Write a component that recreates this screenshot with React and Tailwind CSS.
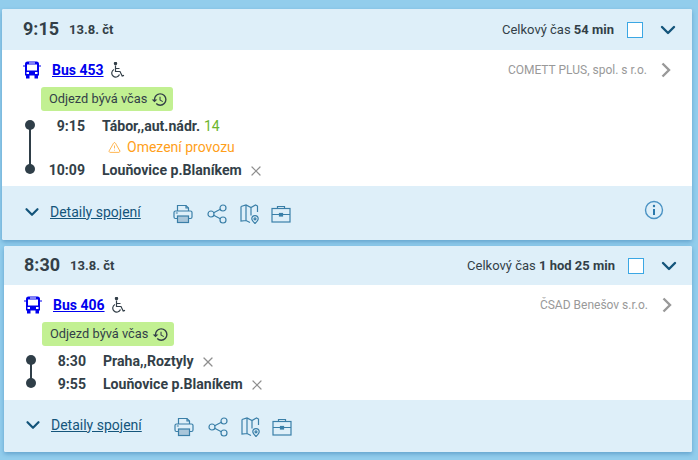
import React from "react";
import { ChevronDown, X, TriangleAlert } from "lucide-react";
import { MdHistory } from "react-icons/md";

const BusIcon = () => (
  <svg width="18" height="18" viewBox="0 0 18 18" fill="none">
    <path fill="#0000ee" d="M4.500 0.500h9a2.500 2.500 0 0 1 2.500 2.500v11.500h-14V3a2.500 2.500 0 0 1 2.500-2.500z" />
    <rect x="4" y="3.500" width="10" height="6" fill="white" />
    <rect x="6" y="1.500" width="6" height="1" fill="white" />
    <rect x="3.500" y="11" width="2.500" height="2" fill="white" />
    <rect x="12" y="11" width="2.500" height="2" fill="white" />
    <rect x="3" y="14" width="3.500" height="3.500" fill="#0000ee" />
    <rect x="11.500" y="14" width="3.500" height="3.500" fill="#0000ee" />
    <path d="M0 5h2M16 5h2" stroke="#0000ee" strokeWidth="1.200" />
  </svg>
);

const WheelchairIcon = () => (
  <svg width="14" height="16" viewBox="0 0 14 16" fill="none" stroke="#333f48" strokeWidth="1.200">
    <circle cx="4.500" cy="1.500" r="1.100" fill="#333f48" />
    <path d="M4.500 3.500v6h4.500l2.200 4.500 1.800-.6M4.500 6.500h4" />
    <path d="M3 7.500a4 4 0 1 0 5.500 5" />
  </svg>
);

const PrinterIcon = () => (
  <svg width="20" height="20" viewBox="0 0 20 20" fill="none" stroke="#3a7fa8" strokeWidth="1.200">
    <path d="M4.500 7V1.500h8.500l2.500 2.500v3" />
    <path d="M13 1.500V4h2.500" />
    <path d="M4 14.500H2.500A1.500 1.500 0 0 1 1 13V8.500A1.500 1.500 0 0 1 2.500 7h15A1.500 1.500 0 0 1 19 8.500V13a1.500 1.500 0 0 1-1.500 1.500H16" />
    <rect x="4.500" y="12" width="11" height="6.500" fill="#a9c6da" />
    <path d="M2.800 9h2" />
  </svg>
);

const ShareIcon = () => (
  <svg width="20" height="20" viewBox="0 0 20 20" fill="none" stroke="#3a7fa8" strokeWidth="1.200">
    <circle cx="4" cy="10" r="3" />
    <circle cx="16" cy="4" r="3" />
    <circle cx="16" cy="16" r="3" />
    <path d="M6.700 8.700 13.300 5.300M6.700 11.300l6.600 3.400" />
  </svg>
);

const MapPinIcon = () => (
  <svg width="20" height="20" viewBox="0 0 20 20" fill="none" stroke="#3a7fa8" strokeWidth="1.200">
    <path d="M1 2.500 6 1l5 2.500L15.500 1l2 1v6M6 1v15.500M11 3.500v8M1 2.500V17l5-.5 4 2" />
    <path d="M15 19.500c-2-2-3.200-3.200-3.200-4.700a3.200 3.200 0 0 1 6.400 0c0 1.500-1.200 2.700-3.200 4.700z" />
    <circle cx="15" cy="14.800" r="1" />
  </svg>
);

const BriefcaseIcon = () => (
  <svg width="20" height="20" viewBox="0 0 20 20" fill="none" stroke="#3a7fa8" strokeWidth="1.200">
    <rect x="1" y="4.500" width="18" height="13.500" />
    <path d="M6.500 4.500V2.500h7v2M1 10.500h18" />
    <rect x="8.500" y="9.500" width="3" height="2.500" fill="#3a7fa8" />
  </svg>
);

const InfoIcon = () => (
  <svg width="20" height="20" viewBox="0 0 20 20" fill="none" className="absolute right-[28px] top-[14px]">
    <circle cx="10" cy="10" r="8.500" stroke="#4b93c4" strokeWidth="1.400" />
    <circle cx="10" cy="6" r="1.200" fill="#2a78ab" />
    <path d="M10 9v6" stroke="#2a78ab" strokeWidth="2" />
  </svg>
);

const CarrierArrow = () => (
  <svg width="10" height="16" viewBox="0 0 10 16" fill="none" stroke="#999" strokeWidth="2.400" className="ml-[14px]">
    <path d="M1.500 1.500 8 8l-6.500 6.500" />
  </svg>
);

const Stop = ({ time, name, platform, cross }) => (
  <div className="flex items-center h-[23px]">
    <span className="w-[62px] text-right font-bold text-[14.100px] text-[#333f48]">{time}</span>
    <span className="ml-[17px] font-bold text-[14.100px] text-[#333f48]">{name}</span>
    {platform && <span className="ml-1 text-[14px] text-[#6cb52d]">{platform}</span>}
    {cross && <X size={16} className="ml-[6px] text-[#8f8f8f]" strokeWidth={1.8} />}
  </div>
);

const Connection = ({ time, total, bus, carrier, first, last, warning, platform, firstCross, showInfo, className, headerClass, bodyClass, footerClass }) => (
  <div className={`bg-white rounded-[2px] shadow-[0_2px_4px_rgba(30,100,160,0.4)] overflow-hidden ${className}`}>
    <div className={`flex items-center bg-[#deeff9] ${headerClass}`}>
      <span className="mb-[2px] font-bold text-[18px] text-[#333f48]">{time}</span>
      <span className="ml-[10px] font-bold text-[13px] text-[#333f48]">13.8. čt</span>
      <span className="ml-auto text-[13px] text-[#333f48]">
        Celkový čas <b>{total}</b>
      </span>
      <span className="ml-[13px] w-[16px] h-[16px] bg-white border border-[#3ba7e4]" />
      <ChevronDown size={24} strokeWidth={2.4} className="ml-[13px] text-[#14557b]" />
    </div>
    <div className={`pt-[9px] ${bodyClass}`}>
      <div className="flex items-center h-[22px]">
        <BusIcon />
        <a className="ml-[11px] font-bold text-[14px] text-[#0000ee] underline">{bus}</a>
        <span className="ml-[7px] flex"><WheelchairIcon /></span>
        <span className="ml-auto text-[12px] text-[#999]">{carrier}</span>
        <CarrierArrow />
      </div>
      <div className="mt-[6px] ml-[18px] w-fit flex items-center gap-[4px] h-[24px] pl-[8px] pr-[5px] rounded-[3px] bg-[#c2f092] text-[12.800px] text-[#333f48]">
        Odjezd bývá včas
        <MdHistory size={17} />
      </div>
      <div className="relative mt-[4px]">
        <div className="absolute left-[6px] top-[9px] bottom-[11px] w-[2px] bg-[#2f3e48]" />
        <div className="absolute left-[2px] top-[5px] w-[10px] h-[10px] rounded-full bg-[#2f3e48]" />
        <div className="absolute left-[2px] bottom-[8px] w-[10px] h-[10px] rounded-full bg-[#2f3e48]" />
        <Stop time={first[0]} name={first[1]} platform={platform} cross={firstCross} />
        {warning && (
          <div className="flex items-center h-[19px] mb-[2px] pl-[85px] text-[14px] text-[#ff9f1a]">
            <TriangleAlert size={13} strokeWidth={1.4} className="mr-[6px]" />
            {warning}
          </div>
        )}
        <Stop time={last[0]} name={last[1]} cross />
      </div>
    </div>
    <div className={`relative flex items-center bg-[#deeff9] mt-[4px] ${footerClass}`}>
      <ChevronDown size={22} strokeWidth={2.4} className="mb-[3px] ml-[-2px] text-[#14557b]" />
      <a className="ml-[7px] mb-[2px] text-[14px] text-[#14557b] underline">Detaily spojení</a>
      <div className="ml-[32px] mt-[2px] flex items-center">
        <PrinterIcon />
        <span className="ml-[14px] flex"><ShareIcon /></span>
        <span className="ml-[13px] flex"><MapPinIcon /></span>
        <span className="ml-[11px] flex"><BriefcaseIcon /></span>
      </div>
      {showInfo && <InfoIcon />}
    </div>
  </div>
);

export default function App() {
  return (
    <div className="w-[698px] h-[460px] overflow-hidden bg-[#92cdec] font-['Roboto',sans-serif]">
      <div className="flex flex-col gap-[6px] pt-[9px]">
        <Connection
          className="ml-[2px] w-[690px]"
          headerClass="h-[41px] pl-[21px] pr-[12px]"
          bodyClass="pl-[21px] pr-[21px]"
          footerClass="h-[54px] pl-[21px]"
          showInfo
          time="9:15"
          total="54 min"
          bus="Bus 453"
          carrier="COMETT PLUS, spol. s r.o."
          first={["9:15", "Tábor,,aut.nádr."]}
          platform="14"
          warning="Omezení provozu"
          last={["10:09", "Louňovice p.Blaníkem"]}
        />
        <Connection
          className="ml-[4px] w-[688px]"
          headerClass="h-[39px] pl-[20px] pr-[11px]"
          bodyClass="pl-[20px] pr-[20px]"
          footerClass="h-[52px] pl-[20px]"
          time="8:30"
          total="1 hod 25 min"
          bus="Bus 406"
          carrier="ČSAD Benešov s.r.o."
          first={["8:30", "Praha,,Roztyly"]}
          firstCross
          last={["9:55", "Louňovice p.Blaníkem"]}
        />
      </div>
    </div>
  );
}
